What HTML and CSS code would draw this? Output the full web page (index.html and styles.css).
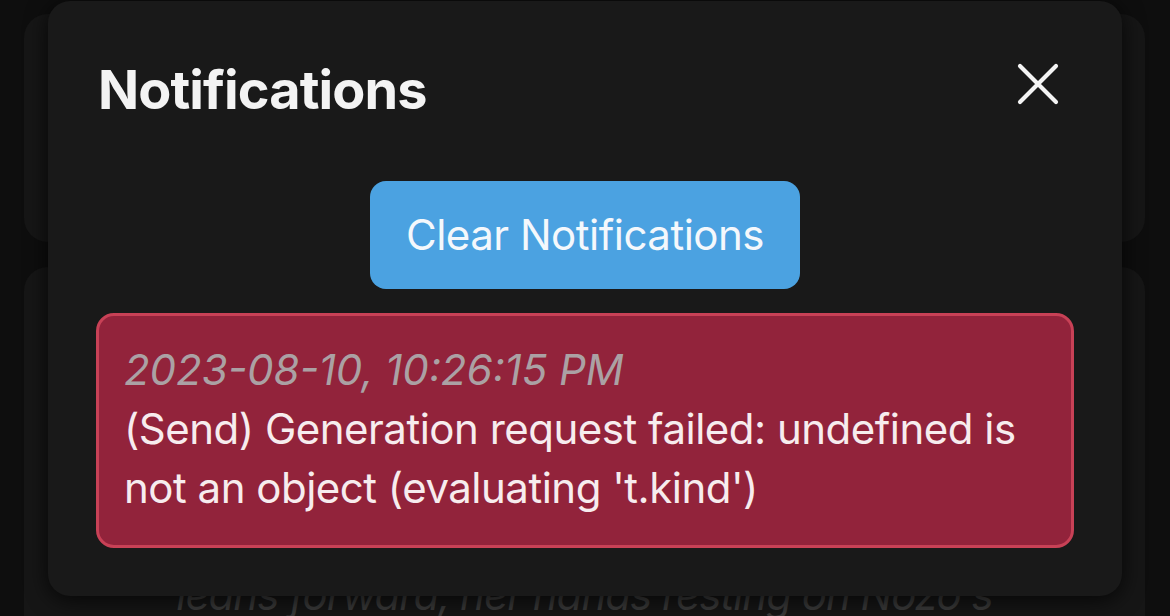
FILE: index.html
```html
<!DOCTYPE html>
<html lang="en">
<head>
<meta charset="utf-8">
<title>Notifications</title>
<link rel="stylesheet" href="styles.css">
</head>
<body>
  <main class="page">
    <section class="bg-card bg-card--top"></section>
    <section class="bg-card bg-card--story">
      <p class="story">leans forward, her hands resting on Nozo's</p>
    </section>
  </main>

  <div class="modal" role="dialog" aria-labelledby="modal-title">
    <header class="modal-header">
      <h1 id="modal-title" class="modal-title">Notifications</h1>
      <button class="close-btn" aria-label="Close">
        <svg viewBox="0 0 42 42" width="42" height="42" aria-hidden="true">
          <path d="M3 3 L39 39 M39 3 L3 39" stroke="#f4f4f4" stroke-width="4.2" stroke-linecap="round" fill="none"/>
        </svg>
      </button>
    </header>
    <div class="modal-actions">
      <button class="clear-btn">Clear Notifications</button>
    </div>
    <ul class="notice-list">
      <li class="notice notice--error">
        <div class="notice-time">2023-08-10, 10:26:15 PM</div>
        <div class="notice-text">(Send) Generation request failed: undefined is not an object (evaluating 't.kind')</div>
      </li>
    </ul>
  </div>
</body>
</html>
```
FILE: styles.css
```css
* { box-sizing: border-box; }

html, body {
  margin: 0;
  padding: 0;
  height: 100%;
  overflow: hidden;
}

body {
  background: #0e0e0e;
  font-family: Inter, "Noto Sans", "Liberation Sans", sans-serif;
  color: #f2f2f2;
  position: relative;
}

.page {
  display: flex;
  flex-direction: column;
  gap: 25px;
  padding: 14px 25px 0 24px;
}

.bg-card {
  background: #161616;
  border-radius: 24px;
}

.bg-card--top {
  height: 228px;
}

.bg-card--story {
  height: 349px;
  padding-top: 298px;
  border-radius: 24px 24px 0 0;
}

.story {
  margin: 0;
  text-align: center;
  font-style: italic;
  font-size: 42px;
  line-height: 60px;
  letter-spacing: -1px;
  color: #3a3a3a;
  white-space: nowrap;
}

.modal {
  position: absolute;
  left: 48px;
  top: 1px;
  width: 1074px;
  background: #191919;
  border-radius: 22px;
  box-shadow: 0 4px 22px rgba(0, 0, 0, 0.75);
  padding: 56px 48px 48px;
}

.modal-header {
  display: flex;
  align-items: center;
  justify-content: space-between;
  height: 66px;
}

.modal-title {
  margin: 0 0 0 2px;
  font-size: 54px;
  line-height: 66px;
  font-weight: 700;
  color: #f3f3f3;
  letter-spacing: -0.9px;
}

.close-btn {
  width: 72px;
  height: 72px;
  margin-bottom: 12px;
  padding: 0;
  border: 0;
  background: transparent;
  display: flex;
  align-items: center;
  justify-content: center;
}

.modal-actions {
  display: flex;
  justify-content: center;
  margin-top: 58px;
}

.clear-btn {
  height: 108px;
  padding: 0 36px;
  border: 0;
  border-radius: 16px;
  background: #4ba2e1;
  color: #f4f8fc;
  font-family: inherit;
  font-size: 42px;
  line-height: 108px;
  font-weight: 400;
  letter-spacing: -0.5px;
}

.notice-list {
  list-style: none;
  margin: 24px 0 0;
  padding: 0;
}

.notice {
  border-radius: 18px;
  padding: 24px 24px 28px 25px;
  font-size: 42px;
  line-height: 59px;
}

.notice--error {
  background: #92233b;
  border: 3px solid #c84156;
}

.notice-time {
  font-style: italic;
  color: #aba1a4;
}

.notice-text {
  color: #f7ecee;
  letter-spacing: -0.5px;
}
```
